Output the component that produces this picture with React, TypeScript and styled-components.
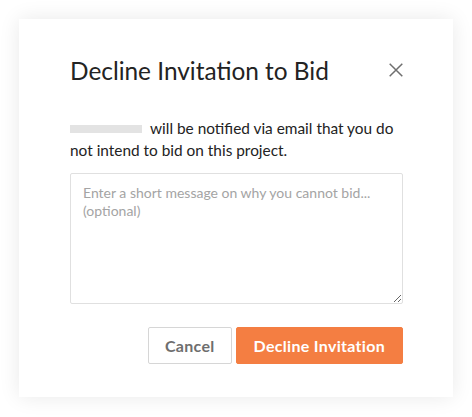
import React from "react";
import styled, { createGlobalStyle } from "styled-components";

const Global = createGlobalStyle`
  html, body { margin: 0; padding: 0; background: #ffffff; }
  body { font-family: Lato, "Open Sans", sans-serif; }
  * { box-sizing: border-box; }
`;

const Page = styled.div`
  padding: 19px;
  width: 472px;
  height: 417px;
`;

const Card = styled.div`
  width: 434px;
  height: 378px;
  background: #fff;
  box-shadow: 0 0 20px rgba(0, 0, 0, 0.09);
  padding: 35px 50px 0 51px;
  display: flex;
  flex-direction: column;
`;

const Header = styled.div`
  display: flex;
  align-items: center;
  justify-content: space-between;
  height: 32px;
`;

const Title = styled.h2`
  margin: 0;
  font-size: 24.4px;
  font-weight: 400;
  color: #232323;
`;

const Close = styled.button`
  border: none;
  background: none;
  padding: 0;
  width: 14px;
  height: 14px;
  display: flex;
  cursor: pointer;
`;

const Message = styled.p`
  margin: 31px 0 0;
  font-size: 15.4px;
  line-height: 22px;
  color: #232323;
`;

const Redacted = styled.span`
  display: inline-block;
  width: 72px;
  height: 8px;
  background: #e3e3e3;
  margin-right: 8px;
  vertical-align: 1px;
`;

const TextArea = styled.textarea`
  margin-top: 12px;
  width: 333px;
  height: 131px;
  border: 1px solid #e0e0e0;
  border-radius: 2px;
  padding: 10px 12px;
  font-family: Lato, sans-serif;
  font-size: 14px;
  line-height: 18px;
  color: #232323;
  resize: vertical;
  outline: none;
  &::placeholder { color: #a4a4a4; }
`;

const Actions = styled.div`
  display: flex;
  justify-content: flex-end;
  gap: 4px;
  margin-top: 23px;
  width: 333px;
`;

const Button = styled.button<{ $primary?: boolean }>`
  height: 37px;
  padding: 0 ${(p) => (p.$primary ? "17px" : "16px")};
  border-radius: 2px;
  font-family: Lato, sans-serif;
  font-size: 16px;
  font-weight: 700;
  letter-spacing: 0.3px;
  cursor: pointer;
  border: 1px solid ${(p) => (p.$primary ? "#f47e42" : "#d6d6d6")};
  background: ${(p) => (p.$primary ? "#f47e42" : "#ffffff")};
  color: ${(p) => (p.$primary ? "#ffffff" : "#6e6e6e")};
`;

export default function App() {
  return (
    <>
      <Global />
      <Page>
        <Card>
          <Header>
            <Title>Decline Invitation to Bid</Title>
            <Close aria-label="Close">
              <svg width="14" height="14" viewBox="0 0 14 14">
                <path d="M0.7 0.7 L13.3 13.3 M13.3 0.7 L0.7 13.3" stroke="#6f6f6f" strokeWidth="1.5" />
              </svg>
            </Close>
          </Header>
          <Message>
            <Redacted />
            will be notified via email that you do not intend to bid on this project.
          </Message>
          <TextArea placeholder="Enter a short message on why you cannot bid... (optional)" />
          <Actions>
            <Button>Cancel</Button>
            <Button $primary>Decline Invitation</Button>
          </Actions>
        </Card>
      </Page>
    </>
  );
}
